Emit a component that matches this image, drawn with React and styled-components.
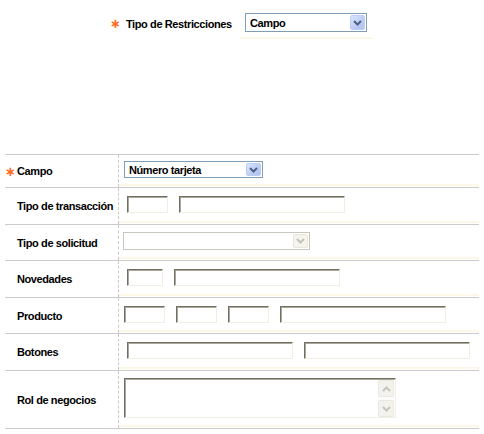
import styled, { createGlobalStyle } from "styled-components";

const GlobalStyle = createGlobalStyle`
  body {
    margin: 0;
    background: #ffffff;
    font-family: "Liberation Sans", Arial, sans-serif;
  }
`;

// Small chevron used by selects and scroll buttons
const Chevron = ({ up, color }) => (
  <svg width="9" height="6" viewBox="0 0 9 6">
    <polyline
      points={up ? "1,5 4.5,1.5 8,5" : "1,1 4.5,4.5 8,1"}
      fill="none"
      stroke={color}
      strokeWidth="2"
    />
  </svg>
);

const Select = ({ value, width, height, disabled }) => (
  <SelectBox $w={width} $h={height} $disabled={disabled}>
    <SelectText>{value}</SelectText>
    <ArrowButton $disabled={disabled}>
      <Chevron color={disabled ? "#c3c1b6" : "#4d6185"} />
    </ArrowButton>
  </SelectBox>
);

const rows = [
  { label: "Tipo de transacción", h: 37, indent: 8, inputs: [41, 166] },
  { label: "Tipo de solicitud", h: 36, select: { width: 187, height: 18 } },
  { label: "Novedades", h: 37, indent: 8, inputs: [36, 166] },
  { label: "Producto", h: 36, indent: 5, inputs: [41, 41, 41, 166] },
  { label: "Botones", h: 37, indent: 8, inputs: [166, 166] },
];

const App = () => {
  return (
    <Page>
      <GlobalStyle />
      <TopRow>
        <TopLabel>
          <Star>∗</Star>
          Tipo de Restricciones
        </TopLabel>
        <TopValue>
          <Select value="Campo" width={122} height={19} />
        </TopValue>
      </TopRow>

      <Table>
        <Row $h={33}>
          <Label>
            <Star $inline>∗</Star>
            Campo
          </Label>
          <Value $indent={5}>
            <Select value="Número tarjeta" width={139} height={17} />
          </Value>
        </Row>

        {rows.map((row) => (
          <Row key={row.label} $h={row.h}>
            <Label>{row.label}</Label>
            <Value $indent={row.indent || 4}>
              {row.select ? (
                <Select value="" disabled {...row.select} />
              ) : (
                row.inputs.map((w, i) => <TextInput key={i} $w={w} />)
              )}
            </Value>
          </Row>
        ))}

        <Row $h={58}>
          <Label>Rol de negocios</Label>
          <Value $indent={5}>
            <AreaBox>
              <AreaText />
              <ScrollBar>
                <ScrollButton>
                  <Chevron up color="#c6c5bb" />
                </ScrollButton>
                <ScrollButton>
                  <Chevron color="#c6c5bb" />
                </ScrollButton>
              </ScrollBar>
            </AreaBox>
          </Value>
        </Row>
      </Table>
    </Page>
  );
};

export default App;

const Page = styled.div`
  width: 484px;
  height: 434px;
  overflow: hidden;
  font-size: 11px;
  font-weight: 700;
  letter-spacing: -0.4px;
  color: #000;
`;

const TopRow = styled.div`
  display: flex;
  padding: 12px 0 0 105px;
`;

const TopLabel = styled.div`
  width: 135px;
  display: flex;
  align-items: center;
  padding-left: 5px;
  padding-bottom: 4px;
  box-sizing: border-box;
`;

const TopValue = styled.div`
  display: flex;
  align-items: center;
  width: 133px;
  padding: 1px 0 5px 5px;
  box-sizing: border-box;
  border-bottom: 2px solid #fcf7e6;
`;

const Star = styled.span`
  display: inline-block;
  width: ${({ $inline }) => ($inline ? "12px" : "16px")};
  margin-left: ${({ $inline }) => ($inline ? "-12px" : "0")};
  font-family: "DejaVu Sans", sans-serif;
  font-size: 13px;
  font-weight: 700;
  letter-spacing: 0;
  color: #ff6a1c;
  line-height: 11px;
`;

const Table = styled.div`
  margin: 115px 5px 0;
  border-top: 1px solid #cbcbcb;
`;

const Row = styled.div`
  display: grid;
  grid-template-columns: 114px 1fr;
  height: ${({ $h }) => $h}px;
  box-sizing: border-box;
  border-bottom: 1px solid #cbcbcb;
`;

const Label = styled.div`
  display: flex;
  align-items: center;
  padding-left: 12px;
  border-right: 1px dashed #c9c9c9;
  white-space: nowrap;
`;

const Value = styled.div`
  display: flex;
  align-items: center;
  gap: 11px;
  padding-left: ${({ $indent }) => $indent}px;
  border-bottom: 2px solid #fcf7e6;
  margin-bottom: 1px;
`;

const SelectBox = styled.div`
  display: flex;
  align-items: center;
  justify-content: space-between;
  width: ${({ $w }) => $w}px;
  height: ${({ $h }) => $h}px;
  box-sizing: border-box;
  padding: 1px;
  background: #fff;
  border: 1px solid ${({ $disabled }) => ($disabled ? "#c9c7ba" : "#7f9db9")};
`;

const SelectText = styled.span`
  padding-left: 3px;
  white-space: nowrap;
`;

const ArrowButton = styled.div`
  display: flex;
  align-items: center;
  justify-content: center;
  width: 15px;
  height: 100%;
  box-sizing: border-box;
  border-radius: 2px;
  border: 1px solid ${({ $disabled }) => ($disabled ? "#e8e6dc" : "#bccdf5")};
  background: ${({ $disabled }) =>
    $disabled
      ? "#f5f4ef"
      : "linear-gradient(135deg, #dbe6fd 0%, #bccbf3 60%, #b0c2f0 100%)"};
`;

const TextInput = styled.div`
  width: ${({ $w }) => $w}px;
  height: 17px;
  box-sizing: border-box;
  background: #fff;
  border-style: solid;
  border-width: 1px;
  border-color: #716f64 #f1efe2 #f1efe2 #716f64;
  box-shadow: inset 1px 1px 0 #aca899;
`;

const AreaBox = styled.div`
  display: flex;
  width: 272px;
  height: 40px;
  box-sizing: border-box;
  background: #fff;
  border-style: solid;
  border-width: 1px;
  border-color: #716f64 #f1efe2 #f1efe2 #716f64;
  box-shadow: inset 1px 1px 0 #aca899;
  padding: 1px 1px 0 1px;
`;

const AreaText = styled.div`
  flex: 1;
`;

const ScrollBar = styled.div`
  width: 16px;
  display: flex;
  flex-direction: column;
  justify-content: space-between;
  background: #fcfcfa;
`;

const ScrollButton = styled.div`
  display: flex;
  align-items: center;
  justify-content: center;
  height: 17px;
  box-sizing: border-box;
  border: 1px solid #ffffff;
  outline: 1px solid #e9e8e1;
  outline-offset: -1px;
  background: #f3f2ec;
  border-radius: 2px;
`;
